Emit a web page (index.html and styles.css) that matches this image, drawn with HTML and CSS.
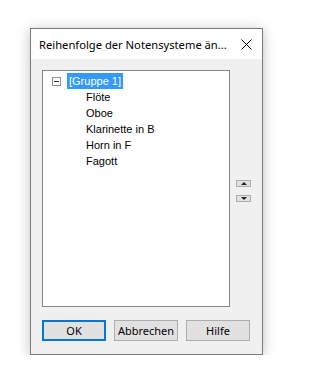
FILE: index.html
```html
<!DOCTYPE html>
<html lang="de">
<head>
  <meta charset="UTF-8">
  <title>Reihenfolge der Notensysteme</title>
  <link rel="stylesheet" href="styles.css">
</head>
<body>

<div class="dialog">
  <div class="titlebar">
    <span class="title">Reihenfolge der Notensysteme än...</span>
    <svg class="close" width="11" height="11" viewBox="0 0 11 11">
      <path d="M0.5 0.5 L10.5 10.5 M10.5 0.5 L0.5 10.5" stroke="#000" stroke-width="1"/>
    </svg>
  </div>

  <div class="content">
    <div class="main">
      <div class="tree">
        <div class="node group">
          <span class="toggle"></span>
          <span class="label selected">[Gruppe 1]</span>
        </div>
        <div class="node item">Flöte</div>
        <div class="node item">Oboe</div>
        <div class="node item">Klarinette in B</div>
        <div class="node item">Horn in F</div>
        <div class="node item">Fagott</div>
      </div>
      <div class="arrows">
        <div class="arrow up"></div>
        <div class="arrow down"></div>
      </div>
    </div>

    <div class="buttons">
      <button class="default">OK</button>
      <button>Abbrechen</button>
      <button>Hilfe</button>
    </div>
  </div>
</div>

</body>
</html>
```

FILE: styles.css
```css
body {
  margin: 0;
  padding: 0;
  background: #fff;
  font-family: 'Liberation Sans', Arial, sans-serif;
  font-size: 11px;
  color: #000;
}
.dialog {
  width: 231px;
  margin: 28px 0 0 30px;
  border: 1px solid #7a7a7a;
  background: #f0f0f0;
  box-shadow: 0 2px 12px rgba(0,0,0,0.25);
}
.titlebar {
  height: 30px;
  background: #fff;
  display: flex;
  align-items: center;
  justify-content: space-between;
  padding: 0 10px 0 8px;
}
.title {
  font-family: 'Noto Sans', sans-serif;
  font-size: 11.2px;
  margin-top: 1px;
}
.close {
  display: block;
}
.content {
  padding: 11px 11px 13px 11px;
}
.main {
  display: flex;
  align-items: flex-start;
}
.tree {
  width: 187px;
  height: 233px;
  border: 1px solid #828790;
  background: #fff;
  padding-top: 2px;
  box-sizing: content-box;
}
.node {
  height: 16px;
  line-height: 16px;
  white-space: nowrap;
}
.group {
  display: flex;
  align-items: center;
  padding-left: 9px;
}
.toggle {
  width: 7px;
  height: 7px;
  border: 1px solid #919191;
  position: relative;
  margin-right: 6px;
  background: #fff;
}
.toggle::after {
  content: "";
  position: absolute;
  left: 1px;
  top: 3px;
  width: 5px;
  height: 1px;
  background: #333;
}
.label {
  padding: 0 2px;
}
.selected {
  background: #3399ff;
  color: #fff;
}
.item {
  padding-left: 43px;
}
.arrows {
  display: flex;
  flex-direction: column;
  gap: 8px;
  margin: 110px 0 0 6px;
}
.arrow {
  width: 13px;
  height: 5px;
  border: 1px solid #adadad;
  background: #e1e1e1;
  position: relative;
}
.arrow::after {
  content: "";
  position: absolute;
  left: 4px;
  border-left: 3px solid transparent;
  border-right: 3px solid transparent;
}
.up::after {
  top: 1px;
  border-bottom: 3px solid #222;
}
.down::after {
  top: 1px;
  border-top: 3px solid #222;
}
.buttons {
  display: flex;
  gap: 8px;
  margin-top: 13px;
}
button {
  width: 64px;
  height: 21px;
  padding: 0;
  border: 1px solid #adadad;
  background: #e1e1e1;
  font-family: 'Noto Sans', sans-serif;
  font-size: 11px;
  color: #000;
}
button.default {
  border: 2px solid #0078d7;
}
```
